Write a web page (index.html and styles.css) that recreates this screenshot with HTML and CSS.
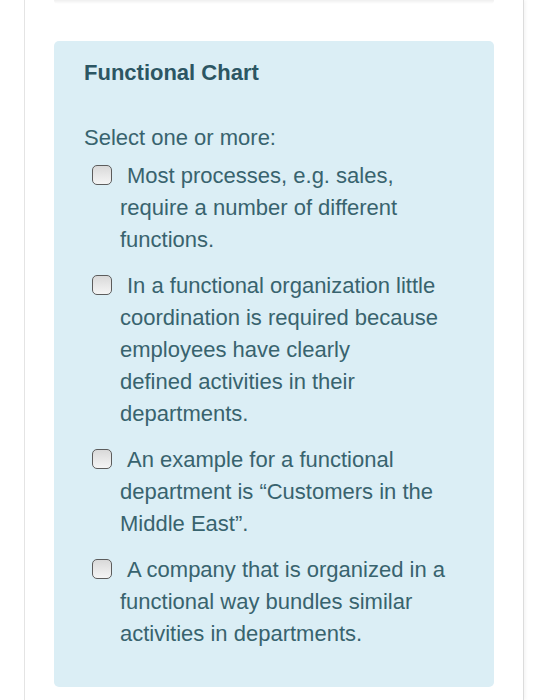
FILE: index.html
```html
<!DOCTYPE html>
<html lang="en">
<head>
<meta charset="utf-8">
<title>Functional Chart</title>
<link rel="stylesheet" href="styles.css">
</head>
<body>
<div class="card">
  <div class="prev-edge"></div>
  <div class="question">
    <h2 class="title">Functional Chart</h2>
    <p class="prompt">Select one or more:</p>
    <div class="answers">
      <label class="option"><input type="checkbox" class="check">Most processes, e.g. sales, require a number of different functions.</label>
      <label class="option"><input type="checkbox" class="check">In a functional organization little coordination is required because employees have clearly<br>defined activities in their departments.</label>
      <label class="option"><input type="checkbox" class="check">An example for a functional department is “Customers in the Middle East”.</label>
      <label class="option"><input type="checkbox" class="check">A company that is organized in a functional way bundles similar activities in departments.</label>
    </div>
  </div>
</div>
</body>
</html>
```
FILE: styles.css
```css
html, body {
  margin: 0;
  padding: 0;
  background: #ffffff;
}

body {
  font-family: "Liberation Sans", Arial, sans-serif;
  overflow: hidden;
}

.card {
  margin-left: 24px;
  width: 500px;
  box-sizing: border-box;
  min-height: 700px;
  border-left: 1px solid #e4e4e4;
  border-right: 1px solid #dcdcdc;
  box-shadow: 2px 0 3px rgba(0, 0, 0, 0.04);
  background: #ffffff;
}

.prev-edge {
  height: 4px;
  margin: 0 29px;
  border-radius: 0 0 5px 5px;
  background: linear-gradient(to bottom, #efefef, #ffffff);
}

.question {
  margin: 37px 29px 0 29px;
  padding: 16px 30px 37px 30px;
  background: #dbeef5;
  border-radius: 5px;
  color: #38636e;
}

.title {
  margin: 0;
  font-size: 22px;
  line-height: 32px;
  font-weight: bold;
  color: #2c5663;
}

.prompt {
  margin: 33px 0 0 0;
  font-size: 22px;
  line-height: 32px;
}

.answers {
  margin-top: 6px;
  display: flex;
  flex-direction: column;
  gap: 14px;
}

.option {
  display: block;
  padding-left: 36px;
  text-indent: -28px;
  font-size: 22px;
  line-height: 32px;
}

.check {
  -webkit-appearance: none;
  appearance: none;
  display: inline-block;
  box-sizing: border-box;
  width: 20px;
  height: 20px;
  margin: 0 15px 0 0;
  vertical-align: -2px;
  border: 1.5px solid #5c5c5c;
  border-radius: 5px;
  background: linear-gradient(to bottom, #d9d9d9, #f5f5f5);
  text-indent: 0;
}
```
